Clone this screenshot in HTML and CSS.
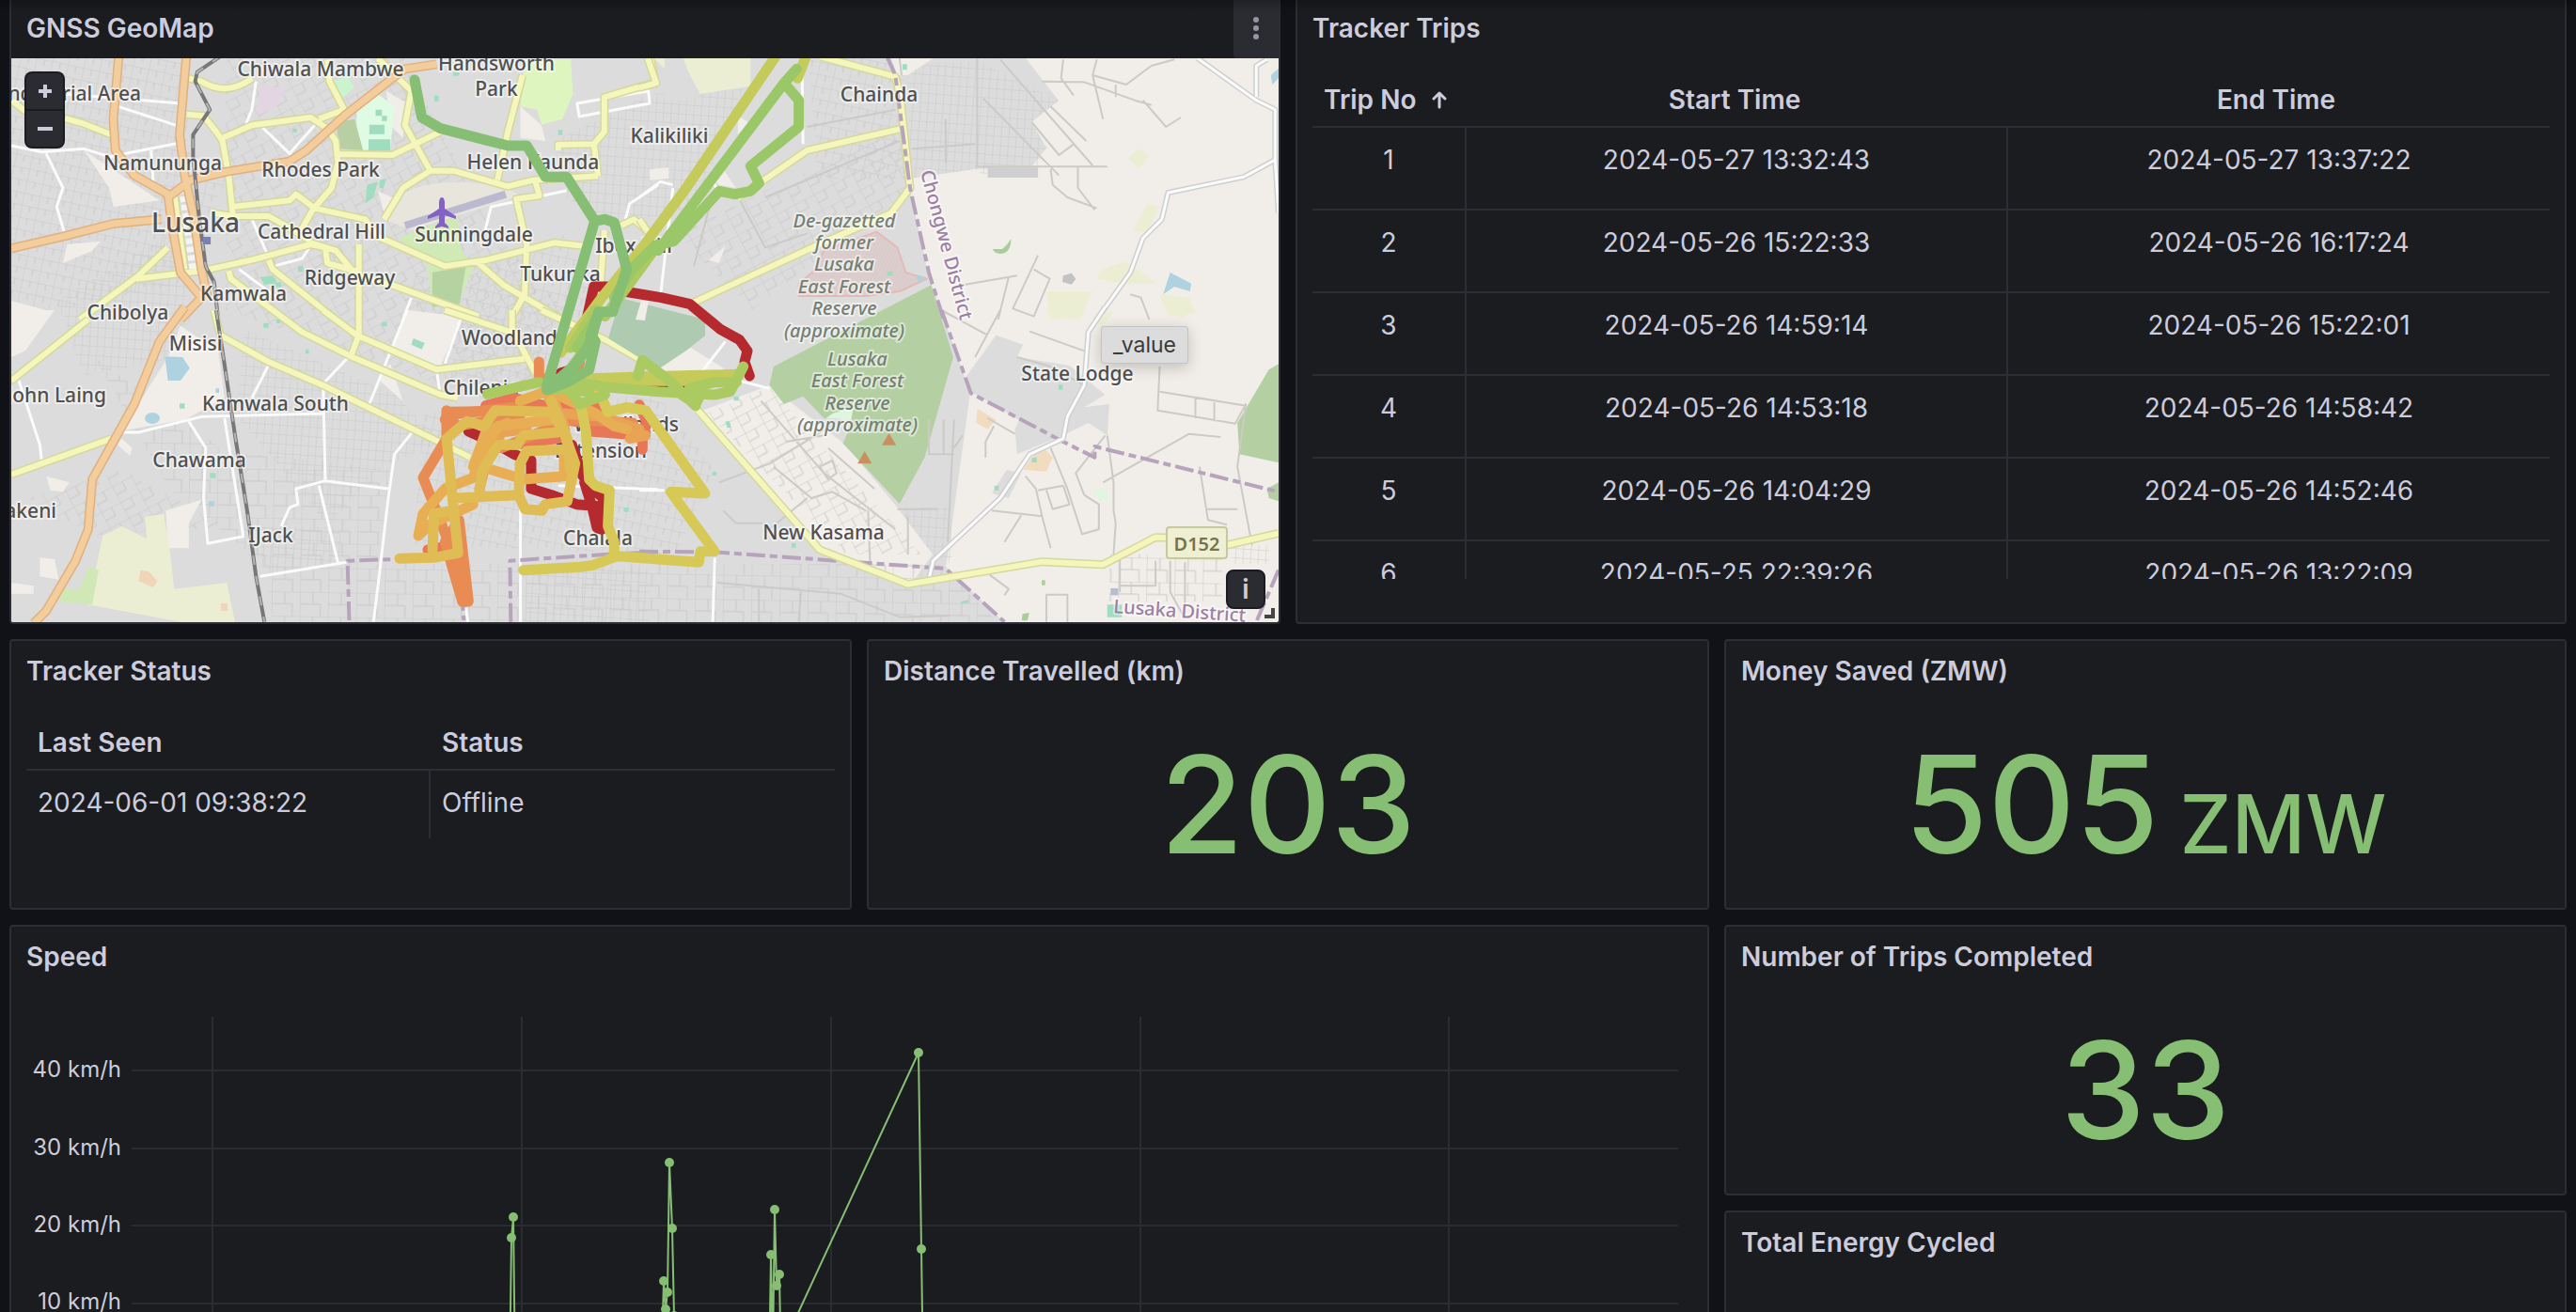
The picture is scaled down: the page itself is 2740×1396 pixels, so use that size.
FILE: index.html
```html
<!DOCTYPE html>
<html lang="en">
<head>
<meta charset="utf-8">
<title>GNSS Tracker Dashboard</title>
<link rel="stylesheet" href="styles.css">
</head>
<body>
<main class="dashboard">

  <section class="panel panel-half">
    <header class="panel-header">
      <h2>GNSS GeoMap</h2>
      <button class="panel-menu" type="button" aria-label="Panel menu">
        <svg width="8" height="26" viewBox="0 0 8 26"><circle cx="4" cy="4" r="3"/><circle cx="4" cy="13" r="3"/><circle cx="4" cy="22" r="3"/></svg>
      </button>
    </header>
    <div class="map">
      <svg class="map-canvas" viewBox="12 62 1348 600" preserveAspectRatio="xMidYMid slice" role="img" aria-label="Map of Lusaka with tracker route">
        <defs>
          <pattern id="streetsA" width="17" height="13" patternUnits="userSpaceOnUse" patternTransform="rotate(12)"><path class="street" d="M0 0H17M0 0V13M9 0V7"/></pattern>
          <pattern id="streetsB" width="23" height="19" patternUnits="userSpaceOnUse" patternTransform="rotate(-28)"><path class="street" d="M0 0H23M0 0V19M12 0V10M0 10H12"/></pattern>
          <pattern id="streetsC" width="8" height="10" patternUnits="userSpaceOnUse" patternTransform="rotate(4)"><path class="street" d="M0 0H8M0 0V10"/></pattern>
          <pattern id="streetsD" width="30" height="26" patternUnits="userSpaceOnUse" patternTransform="rotate(1)"><path class="street" d="M0 0H30M0 0V26M14 0V13M22 13V26M0 13H22"/></pattern>
          <pattern id="hatch" width="8" height="8" patternUnits="userSpaceOnUse" patternTransform="rotate(20)"><path class="hatch" d="M0 0V8"/></pattern>
        </defs>

        <rect class="rural" x="12" y="62" width="1348" height="600"/>
        <path class="urban" d="M12 62H1091L1126 107L1097 130L1113 157L1097 178L1037 180L965 190L988 295L1001 330L1032 418L1010 577L1006 603L1068 662H12Z"/>
        <path class="rural" d="M747 437L818 410L899 473L952 537L992 590L970 620L872 587Z"/>
        <path class="rural" d="M690 385L735 370L770 392L750 412L700 405Z"/>
        <g>
          <path fill="url(#streetsA)" d="M12 62H200V160L240 190L200 300L12 340Z"/>
          <path fill="url(#streetsC)" d="M60 320L180 250L205 330L190 380L90 400Z"/>
          <path fill="url(#streetsB)" d="M240 62H430L520 240L600 330L560 440L240 330Z"/>
          <path fill="url(#streetsC)" d="M260 350L420 420L470 470L400 500L350 560L250 440Z"/>
          <path fill="url(#streetsA)" d="M420 300L600 250L640 330L610 420L480 400Z"/>
          <path fill="url(#streetsC)" d="M590 150L690 100L790 95L740 220L660 240L600 210Z"/>
          <path fill="url(#streetsA)" d="M450 440L700 420L760 500L720 590L440 580Z"/>
          <path fill="url(#streetsC)" d="M275 560L360 560L370 600L280 612Z"/>
          <path fill="url(#streetsD)" d="M280 600H1000L1060 662H290Z"/>
          <path fill="url(#streetsC)" d="M560 605H690V662H560Z"/>
          <path fill="url(#streetsB)" d="M720 250L960 130L970 200L800 330Z"/>
          <path fill="url(#streetsA)" d="M860 62H960L968 190L870 190Z"/>
          <path fill="url(#streetsC)" d="M965 70L1040 65L1126 107L1097 130L1113 157L1100 188L1050 188L1037 180L968 190Z"/>
          <path fill="url(#streetsB)" d="M752 440L818 412L980 590L900 590Z"/>
          <path fill="url(#streetsC)" d="M955 540L1012 540V600L992 590Z"/>
          <path fill="url(#streetsC)" d="M1310 580H1350V600H1310Z"/>
          <path fill="url(#streetsD)" d="M1180 590H1300V640H1180Z"/>
          <path fill="url(#streetsB)" d="M30 530L130 500L240 560L100 570Z"/>
          <path fill="url(#streetsD)" d="M100 380L240 480L420 500L400 600L280 600L180 520Z"/>
        </g>

        <!-- north-west sheet -->
        <g class="sheet" transform="scale(.44643 .33333)">
          <path class="rural" d="M200 480L380 640L270 660L260 600ZM160 780L240 770L220 800L150 840ZM27 960L110 990L60 1020H27ZM900 610L950 640L920 700ZM1240 340L1290 400L1300 450L1240 440ZM920 290L970 330L960 440L930 400Z"/>
          <path fill="#dffbe3" d="M850 340L900 300L940 340L930 475L850 480Z"/>
          <path fill="#cbf3cd" d="M790 260L830 245L845 280L820 310L795 300Z"/>
          <path fill="#b7cfa2" d="M800 390L845 380L865 480L810 475Z"/>
          <path fill="#a0dcc0" d="M880 398h36v30h-36zM878 445h52v36h-52zM895 350h15v20h-15zM910 370h12v16h-12zM875 590l25 -10l-10 50l-20 20zM905 575l15 -5l-6 30h-10zM1080 230l14 0v12h-14zM1035 305h10v18h-10zM1330 415h10v16h-10zM697 410h10v12h-10zM710 850h12v18h-12zM620 885l30 -5l10 20l-30 10zM645 905l25 -5v15h-20z"/>
          <path fill="#e4d5e3" d="M622 270L682 285L660 340L612 370Z"/>
          <path fill="#dff5c0" d="M1250 190H1360L1365 300L1340 380L1290 398L1280 350L1240 340Z"/>
          <path fill="#e7e5dc" d="M960 620Q1030 560 1200 595L1240 625L980 735L915 700Z"/>
          <path class="runway" d="M965 720L1205 620"/>
          <path fill="#cfeab4" d="M950 760L1090 688L1100 800L1130 850L1090 970L1030 980L1020 850Z"/>
          <path fill="#b5d3a0" d="M1030 870L1110 850L1095 970L1030 980Z"/>
          <path class="white" d="M27 465L100 485L200 475L260 500L420 458M110 490L150 600L135 660L155 750M270 335L420 400M155 300L430 330M610 260L600 350L585 400M620 400L690 490L750 400M690 490L700 500M1350 608L1170 660L1155 740M600 700L650 850L720 825L740 785M570 860L660 950M1375 330L1545 290L1548 330L1380 372ZM980 950L960 1020M1490 700L1500 650L1568 590M360 480L365 580"/>
          <path class="yellow-edge" d="M27 320L70 365M155 378L200 395L265 430M450 250L480 260Q540 310 600 250M445 365L485 370L515 420L530 450L545 560L555 690L640 690L700 735L740 770M530 440L600 400L740 375L780 410L800 450L805 520L790 600L745 670L715 740M780 190L785 260L820 350L760 380M805 492L935 495L1050 420M900 186L980 290L965 400L1025 545L960 600L915 700M1025 545L1080 545L1210 595L1270 575L1425 562M1245 240L1210 420L1185 575M1275 575L1285 625L1230 635L1255 780L1250 940L1220 1010M555 660L690 640L705 620L750 665L870 700L900 755L1060 850L1160 830L1320 775L1390 785M325 890L480 865L600 830L740 780L775 790M400 790L330 880L190 1020M740 775L800 800L850 880L935 910L1140 1010M855 780V1020M545 865L550 890L680 1020M640 830L650 860L800 1020M775 790L780 840L860 870M1140 840L1200 910L1340 1020M1480 720L1510 700L1540 735M1440 735L1425 1020M1568 260L1440 310L1440 420L1415 460L1330 462L1330 480M1415 460L1425 562M1550 186L1560 250M415 620L440 860M505 680L555 690"/>
          <path class="yellow" d="M27 320L70 365M155 378L200 395L265 430M450 250L480 260Q540 310 600 250M445 365L485 370L515 420L530 450L545 560L555 690L640 690L700 735L740 770M530 440L600 400L740 375L780 410L800 450L805 520L790 600L745 670L715 740M780 190L785 260L820 350L760 380M805 492L935 495L1050 420M900 186L980 290L965 400L1025 545L960 600L915 700M1025 545L1080 545L1210 595L1270 575L1425 562M1245 240L1210 420L1185 575M1275 575L1285 625L1230 635L1255 780L1250 940L1220 1010M555 660L690 640L705 620L750 665L870 700L900 755L1060 850L1160 830L1320 775L1390 785M325 890L480 865L600 830L740 780L775 790M400 790L330 880L190 1020M740 775L800 800L850 880L935 910L1140 1010M855 780V1020M545 865L550 890L680 1020M640 830L650 860L800 1020M775 790L780 840L860 870M1140 840L1200 910L1340 1020M1480 720L1510 700L1540 735M1440 735L1425 1020M1568 260L1440 310L1440 420L1415 460L1330 462L1330 480M1415 460L1425 562M1550 186L1560 250M415 620L440 860M505 680L555 690"/>
          <path class="yards" d="M435 600L460 860"/>
          <path class="orange-edge" d="M283 180L270 380L275 480L320 560L400 620L410 720L430 870L480 950L430 1020M444 180L428 430L440 560L460 680L480 860L495 950M27 793L150 755L270 714L385 700M405 625L455 575L540 548L690 515L730 480L820 370L930 255L965 220L1040 205"/>
          <path class="orange" d="M283 180L270 380L275 480L320 560L400 620L410 720L430 870L480 950L430 1020M444 180L428 430L440 560L460 680L480 860L495 950M27 793L150 755L270 714L385 700M405 625L455 575L540 548L690 515L730 480L820 370L930 255L965 220L1040 205"/>
          <path class="rail" d="M525 180L470 230L465 260L500 350L460 430L460 500L475 700L490 850L510 900L520 1020"/>
          <path class="rail-gap" d="M525 180L470 230L465 260L500 350L460 430L460 500L475 700L490 850L510 900L520 1020"/>
          <path fill="#7a80b4" d="M484 756h18v24h-18z"/>
        </g>

        <!-- south-west sheet -->
        <g class="sheet" transform="translate(0 330) scale(.44643 .33333)">
          <path class="rural" d="M972 0L1100 20L1050 180L930 130ZM27 0H130L60 130L27 150ZM430 50L520 130L535 280L440 350L290 385L400 150ZM395 640L480 605L450 680L450 760H400ZM110 530L165 550L150 580L120 575ZM95 790L130 795L140 860L95 850ZM27 870L80 880V905H27ZM290 410L315 440L310 465L280 430ZM930 170L960 290L900 220Z"/>
          <path fill="#aed2df" d="M393 148L435 150L452 185L430 225L400 225Z"/>
          <ellipse cx="363" cy="345" rx="18" ry="18" fill="#aed2df"/>
          <path fill="#aed2df" d="M497 610h14v16h-14zM514 250h8v14h-8z"/>
          <path fill="#a0dcc0" d="M985 90L1012 105L1005 125L980 110ZM500 520h14v16h-14zM428 298h12v16h-12zM910 38h12v14h-12zM728 125h8v14h-8zM628 42h12v14h-12zM658 30h10v12h-10zM1486 630h12v14h-12z"/>
          <path fill="#eceed4" d="M245 720L290 690L350 730L345 660L390 650L405 770L415 890L540 870L560 995H430L210 940Z"/>
          <path fill="#cfe8b5" d="M145 890L190 890L210 820L235 830L220 940L140 930Z"/>
          <path fill="#f0d5b8" d="M335 830L355 835L375 865L365 885L330 865ZM526 936h16v24h-16z"/>
          <path class="white" d="M45 225L95 430L100 490M270 390L330 390L480 340L770 330M450 355L490 440L485 600L495 745L580 722M535 345L580 725M830 150L770 235L775 545L705 570L710 620L690 630L670 690M775 545L925 570M760 560L805 805M620 850L825 805M985 385L940 460L925 600L905 830L890 995M640 175L600 280M970 0L880 300M1100 20L1060 170M1040 190L1050 280M1240 560V995M1330 560L1568 572M1110 950L1115 995"/>
          <path class="boundary" d="M832 990L828 800L940 795M1100 900L1105 990M1217 995L1215 800L1440 780L1568 772"/>
          <path class="yellow-edge" d="M27 525L265 410M27 225L210 30M510 0L525 80L640 165L770 240L1030 410L1120 470M650 0L720 70L840 150L1050 270L1090 280M770 0L850 80L1040 190L1250 155M855 0V80L835 150M1220 0V60L1275 200M1060 0L1240 80M1290 0L1450 100L1568 190"/>
          <path class="yellow" d="M27 525L265 410M27 225L210 30M510 0L525 80L640 165L770 240L1030 410L1120 470M650 0L720 70L840 150L1050 270L1090 280M770 0L850 80L1040 190L1250 155M855 0V80L835 150M1220 0V60L1275 200M1060 0L1240 80M1290 0L1450 100L1568 190"/>
          <path class="orange-edge" d="M440 -10L380 100L320 300L220 540L210 700L180 800L110 960L80 1000"/>
          <path class="orange" d="M440 -10L380 100L320 300L220 540L210 700L180 800L110 960L80 1000"/>
          <path class="rail" d="M515 0L530 130L560 400L590 650L610 850L630 995"/>
          <path class="rail-gap" d="M515 0L530 130L560 400L590 650L610 850L630 995"/>
        </g>

        <!-- north-east sheet -->
        <g class="sheet" transform="translate(680 0) scale(.44643 .33333)">
          <path fill="#eceed4" d="M35 186H265V275L145 300L105 200L60 220ZM1190 475L1215 500L1190 540L1165 505ZM1210 650L1240 660L1210 740L1175 740ZM1100 860L1160 835L1235 905L1150 905L1090 890ZM1240 940L1310 950L1325 1000L1260 1010ZM970 930L1080 930L1050 1020L980 1010Z"/>
          <path class="urban" d="M60 186H105L140 310L60 330Z"/>
          <path class="rural" d="M170 560L200 540L230 600L190 590ZM25 540L70 535V570L25 575ZM600 186L700 186L640 240L615 240ZM165 830L205 785L190 840ZM235 370L260 390L235 430Z"/>
          <path fill="#dacfcf" d="M565 740L615 790L635 870L685 890L620 930L540 945L380 945L380 905L420 860L440 800Z"/>
          <path fill="url(#hatch)" class="pink-line" d="M565 740L615 790L635 870L685 890L620 930L540 945L380 945L380 905L420 860L440 800Z"/>
          <path fill="#aed2df" d="M1265 870L1315 905L1312 930L1275 915L1248 940ZM1523 218L1505 240L1508 270L1523 250ZM660 885L672 880L680 895L665 900Z"/>
          <path fill="#a9cf98" d="M886 762Q885 810 860 810Q845 808 842 795L865 795Q878 780 886 762Z"/>
          <path fill="#c2c2c2" d="M1010 880L1030 872L1040 890L1030 908L1008 900Z"/>
          <path fill="#a0dcc0" d="M627 205h11v18h-11zM590 866h14v14h-14z"/>
          <path fill="#cfcfcf" d="M830 535H950V567H830Z"/>
          <path class="track" d="M800 532H1115M820 315L1000 560M860 190L1080 528M1010 190L1005 250L1035 305M960 260L1060 262L1180 320L1220 335M1080 240L1105 380M1090 190L1080 240L1160 270L1220 210L1275 190M1200 320L1255 405L1290 375M1135 270V310M980 540L985 590L1020 630L1090 665M1045 530V600L1085 670M980 340L1065 450M935 390L1000 495L1035 460M950 815L890 985L940 1010L978 890L940 860M770 910L900 880M880 885L855 1020M1170 940L1195 950L1215 1020M650 475L800 460M805 186V530M730 380V520M400 405L610 350M300 630L620 450M240 640L300 790L400 745M130 850L175 620M620 186L625 240"/>
          <path class="white-edge" d="M1330 186L1470 320L1515 350V510L1440 565L1260 615L1245 700L1200 760L1170 870L1090 1020M1495 190L1470 210V310M1515 510L1523 680"/>
          <path class="white" d="M1330 186L1470 320L1515 350V510L1440 565L1260 615L1245 700L1200 760L1170 870L1090 1020M1495 190L1470 210V310M1515 510L1523 680M388 230L390 460M80 600L50 950M0 630L50 580L80 590M170 560L190 620"/>
          <path class="yellow-edge" d="M430 180L610 245L622 310L645 600L600 680L420 785L130 965M620 412L400 480L235 632M20 186L40 265L0 280M0 700L20 740"/>
          <path class="yellow" d="M430 180L610 245L622 310L645 600L600 680L420 785L130 965M620 412L400 480L235 632M20 186L40 265L0 280M0 700L20 740"/>
          <path class="boundary" d="M590 180L610 240L645 600L690 870L725 1020"/>
        </g>

        <!-- south-east sheet -->
        <g class="sheet" transform="translate(680 330) scale(.44643 .33333)">
          <path class="urban" d="M850 80L1000 150L1110 270L1060 310L1120 300L1115 400L1070 360L1010 400L900 460L895 380L905 350L790 260L780 210Z"/>
          <path class="urban" d="M875 510L910 520L880 600L840 585Z"/>
          <path class="rural" d="M930 68L1060 130L1040 180L900 150Z"/>
          <path fill="#b4d0a2" d="M695 -80L748 150L680 470L620 618L485 425L510 350L440 345L390 275L345 300L310 240L320 180ZM1523 172L1500 190L1425 360L1430 460L1523 487ZM1495 570L1523 550V610L1500 600Z"/>
          <path fill="#dff5df" d="M460 330L510 310L505 350L445 345ZM1080 575L1110 570L1118 600L1100 613Z"/>
          <path fill="#eceed4" d="M970 -10H1060L1050 20L980 30ZM1080 20L1130 5L1100 60ZM1270 0H1320L1290 28Z"/>
          <path fill="#f1dcbf" d="M805 315L850 350L830 380L803 360ZM960 435L985 470L970 515L915 510L930 480Z"/>
          <path fill="#c9905f" d="M595 393L612 431H578ZM537 450L554 490H520Z"/>
          <path fill="#a0dcc0" d="M1115 940h35v40h-35zM999 238h10v16h-10zM205 355l10 0l4 20h-10zM174 516h10v12h-10zM363 744h10v14h-10zM846 560h10v16h-10zM935 470h12v16h-12zM225 275h12v14h-12zM766 930l18 -5v10h-18z"/>
          <path fill="#a9cf98" d="M913 970l16 -4l-4 25h-14zM959 862h8v16h-8z"/>
          <path fill="#b9bccd" d="M1123 888h18v22h-18z"/>
          <path class="track" d="M860 0L800 150M930 68L1060 130M900 150L980 180L1060 240M1240 260L1445 305M1240 180L1235 320L1420 362L1445 300L1425 500L1450 680L1460 750M1325 280V345M1370 290V355M830 345L895 395M845 370L825 420V470M1105 550L1310 395L1385 405M1115 400L1130 550V640L1135 680L1130 780M980 440L1020 570L1055 715L1095 700V620L1060 590L1040 520L1110 400M920 530L945 570L960 660L980 760M950 575L1010 560M1010 560L1025 620L985 635L970 575M840 640L960 658M910 655L870 740M1335 500L1355 670L1400 685M1350 635H1425M835 845L880 890L870 910M970 995V908H1020V995M1145 780V900M1145 880H1230V800M1265 800V900L1300 985M1300 805V970M720 0L830 80M750 350L735 740M770 400L750 440M690 350V460H750M725 350V460M615 635H710M640 660V780M545 640L550 810M320 500L410 600L460 580L540 640M290 290L440 520L610 700M450 440L560 570M350 420L440 400M190 550L310 490L480 350M430 500L460 480L470 520L450 540L430 500M400 600L310 700M185 870L480 905L620 980L740 975M285 890V995M385 900L380 995M200 640L230 680H300"/>
          <path class="boundary" d="M720 0L790 265L1010 420L1085 470V435L1523 580M0 770L190 773L730 825L870 995M1523 830L1470 995"/>
          <path class="white-edge" d="M1110 -10L1070 70L1060 240L1020 340L1010 410L930 460L860 600L700 800L690 860"/>
          <path class="white" d="M1110 -10L1070 70L1060 240L1020 340L1010 410L930 460L860 600L700 800L690 860M205 100L150 195L310 250M180 790L175 995M0 575H60"/>
          <path class="yellow-edge" d="M140 320L430 765L640 875L960 803L1105 812L1230 725L1300 728L1400 750L1523 712"/>
          <path class="yellow" d="M140 320L430 765L640 875L960 803L1105 812L1230 725L1300 728L1400 750L1523 712"/>
        </g>

        <path fill="#aecab1" d="M660 317L750 340V357L730 373L700 393L647 360Z"/>
        <path class="rural" d="M682 320H690L686 341L676 340Z"/>

        <path class="plane" d="M470 210c2 0 3 3 3 6v6l12 8v3l-12-4v8l4 4v2l-7-2l-7 2v-2l4-4v-8l-12 4v-3l12-8v-6c0-3 1-6 3-6z"/>

        <g class="place">
          <text x="341" y="81">Chiwala Mambwe</text>
          <text x="528" y="75">Handsworth</text>
          <text x="528" y="102">Park</text>
          <text x="150" y="107" class="end">Industrial Area</text>
          <text x="173" y="181">Namununga</text>
          <text x="341" y="188">Rhodes Park</text>
          <text x="208" y="247" class="city">Lusaka</text>
          <text x="342" y="254">Cathedral Hill</text>
          <text x="504" y="257">Sunningdale</text>
          <text x="567" y="180">Helen Kaunda</text>
          <text x="712" y="152">Kalikiliki</text>
          <text x="935" y="108">Chainda</text>
          <text x="674" y="269">Ibex Hill</text>
          <text x="596" y="299">Tukunka</text>
          <text x="372" y="303">Ridgeway</text>
          <text x="259" y="320">Kamwala</text>
          <text x="136" y="340">Chibolya</text>
          <text x="208" y="373">Misisi</text>
          <text x="113" y="428" class="end">John Laing</text>
          <text x="293" y="437">Kamwala South</text>
          <text x="212" y="497">Chawama</text>
          <text x="60" y="551" class="end">Makeni</text>
          <text x="288" y="577">IJack</text>
          <text x="547" y="367">Woodlands</text>
          <text x="512" y="420">Chilenje</text>
          <text x="722" y="459" class="end">Woodlands</text>
          <text x="688" y="487" class="end">Extension</text>
          <text x="636" y="580">Chalala</text>
          <text x="1146" y="405">State Lodge</text>
          <text x="876" y="574">New Kasama</text>
        </g>
        <g class="reserve">
          <text x="898" y="242">De-gazetted</text>
          <text x="898" y="265">former</text>
          <text x="898" y="288">Lusaka</text>
          <text x="898" y="312">East Forest</text>
          <text x="898" y="335">Reserve</text>
          <text x="898" y="359">(approximate)</text>
          <text x="912" y="389">Lusaka</text>
          <text x="912" y="412">East Forest</text>
          <text x="912" y="436">Reserve</text>
          <text x="912" y="459">(approximate)</text>
        </g>
        <g class="district">
          <text transform="translate(979 183) rotate(75)">Chongwe District</text>
          <text transform="translate(1184 652) rotate(4)">Lusaka District</text>
        </g>
        <rect class="shield" x="1241" y="561" width="64" height="33" rx="3"/>
        <text class="shield-text" x="1273" y="586">D152</text>

        <!-- recorded route, oldest points first -->
        <g class="route" transform="translate(400 260) scale(.33333)">
          <g stroke="#b52a2e">
            <path d="M670 250L695 135H740L790 150L910 170L1000 190L1100 272L1160 305L1185 340L1176 375L1192 420"/>
            <path d="M295 597L380 635L440 670L495 690V780L560 800L640 830L700 835"/>
            <path d="M590 410L640 395L670 460M370 560L420 540M660 430L980 455"/>
            <path d="M625 640L660 740" stroke-width="16"/>
            <path d="M665 760L725 810L720 910L705 905L690 840Z" stroke-width="18" fill="#b52a2e"/>
          </g>
          <g stroke="#e87758">
            <path d="M350 515L440 490L560 520L700 510L740 580M840 512L865 570L850 610L690 598M850 600V655M600 560L860 600M165 975L250 960M440 640L580 620"/>
          </g>
          <g stroke="#e88c53">
            <path d="M520 375V420L560 450L650 380V370M220 560L230 535L480 530M225 530V620L150 745L200 870L250 1000M250 960L285 1140M400 650L620 560L820 570"/>
            <path d="M220 950L265 880L295 1140H275Z" fill="#e88c53" stroke-width="14"/>
            <path d="M225 545L440 520L460 545L260 580Z" fill="#e88c53" stroke-width="14"/>
          </g>
          <g stroke="#e8a354">
            <path d="M600 540L720 550L840 590L810 620L860 610M560 480L600 580L620 700M330 780L350 700L400 600L480 590"/>
          </g>
          <g stroke="#e8ae54">
            <path d="M135 930L150 860L220 780L310 745L340 660L390 580L560 560M310 710L350 600L420 570M370 720L470 750L600 740V660M310 830L170 895L140 925M460 500L540 470L590 560M540 460L700 540L760 580L800 590"/>
          </g>
          <g stroke="#e0bc54">
            <path d="M75 1003L185 1000L262 985L250 870L225 620L290 565L345 580L380 530L560 535L600 600L635 700L610 820L540 830L530 850L475 845L455 800L460 700L480 660L600 655M180 975L185 860L240 850M250 810L450 800M330 790L340 720L390 640L450 640L470 610L580 600M560 500L610 620L620 720"/>
          </g>
          <g stroke="#d7c957">
            <path d="M470 1040L650 1030L690 1025L770 995L900 1005L1030 1015L1035 980H1080L940 790L1050 795L860 530L800 520L740 535L720 490L640 450M655 520L670 600L680 750L700 770L745 785L740 900L760 950V990"/>
          </g>
          <g stroke="#c4cb5b">
            <path d="M1275 -600L990 -180L850 10L720 170L590 345M1372 -600L1345 -530M680 428L860 422L1160 415"/>
            <path d="M700 440L860 436L1140 436"/>
          </g>
          <g stroke="#abca61">
            <path d="M900 0L820 110L730 230M700 210L620 330M355 478L520 440M640 440L730 455L900 470L1080 480L1130 470L1172 390M1000 460L1080 440L1150 440M835 420L850 370L930 430L1020 515M960 470L1020 510L1030 490M620 470L650 510L730 480M560 460L680 470"/>
          </g>
          <g stroke="#9ac768">
            <path d="M1342 -560L1302 -515L1349 -460V-375L1195 -250L1222 -195L1195 -170L1145 -160L1095 -170L950 -10L890 5L820 75L760 170M1302 -515L1050 -180L900 20"/>
            <path d="M640 330L700 240L690 300L620 400" fill="#9ac768"/>
          </g>
          <g stroke="#86be73">
            <path d="M123 -525L146 -405L206 -370L421 -315L481 -315L541 -215H608L698 -75L545 450M698 -75L730 -80L760 -70L800 80L755 215H710L685 290L700 310L680 400L610 440L545 465M710 220L680 320L640 380L560 450"/>
          </g>
        </g>
      </svg>

      <div class="zoom">
        <button type="button" aria-label="Zoom in"><svg width="16" height="16" viewBox="0 0 16 16"><path d="M8 1V15M1 8H15"/></svg></button>
        <button type="button" aria-label="Zoom out"><svg width="16" height="16" viewBox="0 0 16 16"><path d="M0 8H16"/></svg></button>
      </div>
      <div class="map-tip">_value</div>
      <button class="map-info" type="button" aria-label="Attributions">i</button>
      <span class="map-corner"></span>
    </div>
  </section>

  <section class="panel panel-half">
    <header class="panel-header"><h2>Tracker Trips</h2></header>
    <div class="panel-body trips-body">
      <table class="data trips">
        <colgroup><col class="col-no"><col><col></colgroup>
        <thead>
          <tr>
            <th class="sorted" aria-sort="ascending">Trip No<svg width="18" height="20" viewBox="0 0 18 20"><path d="M9 18V3M3 9L9 3L15 9"/></svg></th>
            <th>Start Time</th><th>End Time</th>
          </tr>
        </thead>
        <tbody>
          <tr><td>1</td><td>2024-05-27 13:32:43</td><td>2024-05-27 13:37:22</td></tr>
          <tr><td>2</td><td>2024-05-26 15:22:33</td><td>2024-05-26 16:17:24</td></tr>
          <tr><td>3</td><td>2024-05-26 14:59:14</td><td>2024-05-26 15:22:01</td></tr>
          <tr><td>4</td><td>2024-05-26 14:53:18</td><td>2024-05-26 14:58:42</td></tr>
          <tr><td>5</td><td>2024-05-26 14:04:29</td><td>2024-05-26 14:52:46</td></tr>
          <tr><td>6</td><td>2024-05-25 22:39:26</td><td>2024-05-26 13:22:09</td></tr>
        </tbody>
      </table>
    </div>
  </section>

  <section class="panel panel-third">
    <header class="panel-header"><h2>Tracker Status</h2></header>
    <div class="panel-body">
      <table class="data status">
        <thead><tr><th>Last Seen</th><th>Status</th></tr></thead>
        <tbody><tr><td>2024-06-01 09:38:22</td><td>Offline</td></tr></tbody>
      </table>
    </div>
  </section>

  <section class="panel panel-third">
    <header class="panel-header"><h2>Distance Travelled (km)</h2></header>
    <div class="stat"><span class="stat-value">203</span></div>
  </section>

  <section class="panel panel-third">
    <header class="panel-header"><h2>Money Saved (ZMW)</h2></header>
    <div class="stat"><span class="stat-value">505</span><span class="stat-unit">ZMW</span></div>
  </section>

  <section class="panel panel-speed">
    <header class="panel-header"><h2>Speed</h2></header>
    <svg class="chart" viewBox="12 1050 1804 524" preserveAspectRatio="xMinYMin slice" role="img" aria-label="Speed over time">
      <path class="grid" d="M140 1139H1785M140 1222H1785M140 1304H1785M140 1387H1785M226 1082V1574M555 1082V1574M884 1082V1574M1213 1082V1574M1541 1082V1574"/>
      <g class="tick">
        <text x="129" y="1146">40 km/h</text>
        <text x="129" y="1229">30 km/h</text>
        <text x="129" y="1311">20 km/h</text>
        <text x="129" y="1393">10 km/h</text>
      </g>
      <path class="series" d="M542 1466L544 1317L546 1295L548 1466M703 1466L706 1363L708 1393L710 1375L712 1237L715 1307L717 1400M818 1466L820 1335L822 1440L824 1287L826 1368L829 1356L831 1466L817 1466L977 1120L980 1329L982 1466"/>
      <g class="dots">
        <circle cx="546" cy="1295" r="5"/><circle cx="544" cy="1317" r="5"/>
        <circle cx="712" cy="1237" r="5"/><circle cx="715" cy="1307" r="5"/><circle cx="706" cy="1363" r="5"/><circle cx="710" cy="1375" r="5"/><circle cx="708" cy="1393" r="5"/><circle cx="717" cy="1400" r="5"/>
        <circle cx="824" cy="1287" r="5"/><circle cx="820" cy="1335" r="5"/><circle cx="829" cy="1356" r="5"/><circle cx="826" cy="1368" r="5"/>
        <circle cx="977" cy="1120" r="5"/><circle cx="980" cy="1329" r="5"/>
      </g>
    </svg>
  </section>

  <section class="panel panel-third">
    <header class="panel-header"><h2>Number of Trips Completed</h2></header>
    <div class="stat"><span class="stat-value">33</span></div>
  </section>

  <section class="panel panel-third">
    <header class="panel-header"><h2>Total Energy Cycled</h2></header>
  </section>
</main>
</body>
</html>
```
FILE: styles.css
```css
:root {
  --canvas: #111217;
  --panel: #1a1c1f;
  --line: #2d2e33;
  --text: #ccccdc;
  --green: #86be73;
}

* { box-sizing: border-box; }

html, body { height: 100%; }

body {
  margin: 0;
  overflow: hidden;
  background: var(--canvas);
  color: var(--text);
  font-family: Inter, "Liberation Sans", sans-serif;
  font-size: 28px;
  line-height: 44px;
}

body::before {
  content: "";
  position: absolute;
  inset: 0 0 auto;
  height: 14px;
  z-index: 2;
  background: linear-gradient(rgba(0, 0, 0, .25), transparent);
  pointer-events: none;
}

button { font: inherit; color: inherit; border: 0; padding: 0; }

/* the first row is scrolled slightly under the window's top edge */
.dashboard {
  display: grid;
  grid-template-columns: repeat(6, minmax(0, 1fr));
  grid-template-rows: 668px;
  grid-auto-rows: 288px;
  gap: 16px;
  margin-top: -4px;
  padding: 0 10px;
}

.panel {
  display: flex;
  flex-direction: column;
  min-width: 0;
  overflow: hidden;
  background: var(--panel);
  border: 2px solid var(--line);
  border-radius: 4px;
}
.panel-half { grid-column: span 3; }
.panel-third { grid-column: span 2; }
.panel-speed { grid-column: span 4; grid-row: span 2; }

.panel-header {
  display: flex;
  flex: none;
  align-items: center;
  justify-content: space-between;
  height: 64px;
  padding-left: 16px;
}
.panel-header h2 { margin: 0; font-size: 28px; font-weight: 600; }

.panel-menu {
  display: flex;
  align-items: center;
  justify-content: center;
  width: 48px;
  height: 64px;
  background: #2b2c31;
  border-radius: 0 0 0 4px;
}
.panel-menu svg { fill: #9595a3; }

.panel-body { flex: 1; min-height: 0; padding: 16px; }
.trips-body { margin-bottom: 46px; padding-bottom: 0; overflow: hidden; }

/* tables */
.data { width: 100%; table-layout: fixed; border-collapse: separate; border-spacing: 0; }
.data th { height: 58px; padding: 0 12px; font-weight: 600; text-align: left; border-bottom: 2px solid var(--line); }
.data td { height: 72px; padding: 12px; vertical-align: top; }
.data td:not(:last-child) { border-right: 2px solid var(--line); }
.trips .col-no { width: 164px; }
.trips th, .trips td { text-align: center; }
.trips th { padding-right: 18px; }
.trips th.sorted { padding: 0 12px; text-align: left; white-space: nowrap; }
.trips td { height: 88px; border-bottom: 2px solid var(--line); }
.sorted svg { margin-left: 16px; fill: none; stroke: var(--text); stroke-width: 3; stroke-linecap: round; stroke-linejoin: round; }

/* stats */
.stat {
  display: flex;
  flex: 1;
  align-items: baseline;
  justify-content: center;
  gap: 22px;
  color: var(--green);
  font-weight: 500;
  line-height: 220px;
}
.stat-value { font-size: 144px; }
.stat-unit { font-size: 86px; }

/* chart */
.chart { display: block; flex: 1; width: 100%; min-height: 0; }
.grid { fill: none; stroke: #2a2c30; stroke-width: 2; }
.tick text { fill: var(--text); font-size: 24px; text-anchor: end; }
.series { fill: none; stroke: var(--green); stroke-width: 2; stroke-linejoin: round; }
.dots { fill: var(--green); }

/* map */
.map { position: relative; flex: 1; min-height: 0; overflow: hidden; }
.map-canvas { display: block; width: 100%; height: 100%; }

.rural { fill: #f1eee9; }
.urban { fill: #dcdcdc; }
.street { fill: none; stroke: #c9c9c9; stroke-width: 1; }
.hatch { stroke: #e3bcbc; stroke-width: 2; }
.pink-line { stroke: #e6b9b9; stroke-width: 2; }
.sheet path { vector-effect: non-scaling-stroke; stroke-linejoin: round; }
.track { fill: none; stroke: #cccac7; stroke-width: 2; }
.white-edge { fill: none; stroke: #cfcfcf; stroke-width: 6; }
.white { fill: none; stroke: #fbfbfb; stroke-width: 3; }
.yellow-edge { fill: none; stroke: #d5d89c; stroke-width: 9; }
.yellow { fill: none; stroke: #f5f6bb; stroke-width: 6; }
.orange-edge { fill: none; stroke: #dfb080; stroke-width: 10; }
.orange { fill: none; stroke: #f3cd9c; stroke-width: 7; }
.rail { fill: none; stroke: #777; stroke-width: 4; }
.rail-gap { fill: none; stroke: #b4b4b4; stroke-width: 2; stroke-dasharray: 10 12; }
.yards { fill: none; stroke: #f4f4f4; stroke-width: 8; stroke-dasharray: 6 3; }
.runway { fill: none; stroke: #bbb9cf; stroke-width: 8; }
.boundary { fill: none; stroke: #b7a3bb; stroke-width: 4; stroke-dasharray: 20 5 8 5; }
.plane { fill: #8461c4; }

.place text,
.reserve text,
.district text {
  font-family: "Noto Sans", "Open Sans", sans-serif;
  font-weight: 500;
  paint-order: stroke;
  stroke: rgba(255, 255, 255, .5);
  stroke-width: 4px;
  stroke-linejoin: round;
}
.place text { fill: #505050; font-size: 21px; text-anchor: middle; }
.place .city { font-size: 28px; }
.place .end { text-anchor: end; }
.reserve text { fill: #758072; font-size: 20px; font-style: italic; text-anchor: middle; }
.district text { fill: #9b80a3; font-size: 20px; }
.shield { fill: #eff0d3; stroke: #c6c89e; stroke-width: 2; }
.shield-text { fill: #73764b; font: 600 20px "Noto Sans", sans-serif; text-anchor: middle; }

.route path { fill: none; stroke-width: 33; stroke-linecap: round; stroke-linejoin: round; }

.zoom {
  position: absolute;
  top: 14px;
  left: 14px;
  display: grid;
  gap: 2px;
  padding: 2px;
  background: #1a1c20;
  border-radius: 8px;
}
.zoom button {
  display: grid;
  place-items: center;
  width: 39px;
  height: 38px;
  background: #2b2c31;
  border-radius: 6px 6px 0 0;
}
.zoom button + button { border-radius: 0 0 6px 6px; }
.zoom path { stroke: var(--text); stroke-width: 4; }

.map-tip {
  position: absolute;
  top: 285px;
  right: 96px;
  padding: 0 12px;
  background: #dcdcdc;
  border: 1px solid #c4c4c4;
  border-radius: 3px;
  box-shadow: 0 4px 16px rgba(0, 0, 0, .2);
  color: #3a3a3a;
  font-size: 23px;
  line-height: 38px;
}

.map-info {
  position: absolute;
  right: 14px;
  bottom: 14px;
  width: 42px;
  height: 42px;
  background: #2b2c31;
  border: 2px solid #1a1c20;
  border-radius: 8px;
  font-weight: 600;
  line-height: 36px;
}

.map-corner {
  position: absolute;
  right: 4px;
  bottom: 4px;
  width: 11px;
  height: 11px;
  border: solid #444;
  border-width: 0 4px 4px 0;
}
```
